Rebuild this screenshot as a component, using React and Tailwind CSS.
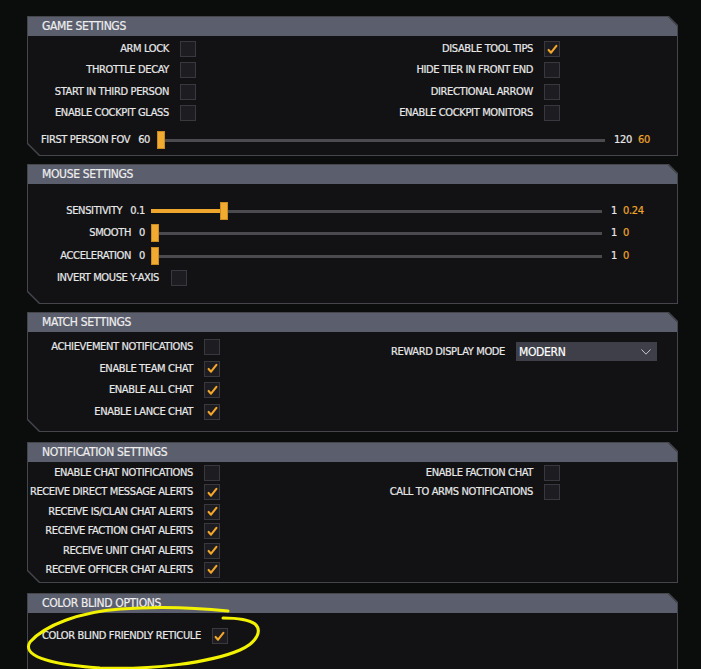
import React from 'react'

const chamfer = '[clip-path:polygon(0_0,calc(100%-9px)_0,100%_9px,100%_100%,12px_100%,0_calc(100%-12px))]'

const Box = ({ on }) => (
  <span className="flex h-4 w-4 shrink-0 items-center justify-center border border-[#38383e] bg-[#1c1c21]">
    {on && (
      <svg viewBox="0 0 16 16" className="h-[13px] w-[13px]">
        <path d="M3.2 8.6l3 3.3L12.8 3.6" fill="none" stroke="#f4a62a" strokeWidth="2.6" strokeLinecap="round" strokeLinejoin="round" />
      </svg>
    )}
  </span>
)

const Check = ({ label, on }) => (
  <div className="flex h-4 items-center justify-end gap-[11px]">
    <span className="whitespace-nowrap">{label}</span>
    <Box on={on} />
  </div>
)

// pct 0..1, thumb is 8px wide
const Slider = ({ pct, fill, className }) => (
  <div className={'relative h-[18px] ' + className}>
    <div className="absolute left-0 right-0 top-[8px] h-[3px] bg-[#4b4b4f]" />
    {fill && <div className="absolute left-0 top-[7px] h-[4px] bg-[#eea62c]" style={{ width: `calc(${pct} * (100% - 8px))` }} />}
    <div className="absolute top-0 h-[18px] w-2 border border-[#c98a1e] bg-[#f1ab30]" style={{ left: `calc(${pct} * (100% - 8px))` }} />
  </div>
)

const Panel = ({ title, className, children }) => (
  <section className={'bg-[#44464c] p-px ' + chamfer + ' ' + className}>
    <div className={'flex h-full flex-col bg-[#121215] ' + chamfer}>
      <div className="h-[19px] shrink-0 bg-[#5b5e6d] pl-[14px] text-[12px] leading-[19px] text-[#eeeeee]">{title}</div>
      {children}
    </div>
  </section>
)

const MouseRow = ({ label, min, pct, value }) => (
  <div className="flex h-[19px] items-center">
    <div className="flex w-[117px] justify-end gap-[8px] whitespace-nowrap">
      <span>{label}</span>
      <span>{min}</span>
    </div>
    <Slider pct={pct} fill className="ml-[6px] w-[451px]" />
    <span className="ml-[9px] w-[12px]">1</span>
    <span className="text-[#eda52c]">{value}</span>
  </div>
)

export default function App() {
  return (
    <div className="relative h-[669px] w-[701px] overflow-hidden bg-[#0b0d0c] pl-[27px] pt-4 font-['Liberation_Sans_Narrow','DejaVu_Sans_Condensed',sans-serif] text-[11px] leading-[16px] tracking-[-0.35px] uppercase text-[#e8e8e8] [-webkit-text-stroke:0.2px_currentColor]">
      {/* Game settings */}
      <Panel title="Game Settings" className="h-[140px] w-[651px]">
        <div className="flex pt-[5px]">
          <div className="flex w-[168px] flex-col gap-[5.3px]">
            <Check label="Arm Lock" />
            <Check label="Throttle Decay" />
            <Check label="Start in Third Person" />
            <Check label="Enable Cockpit Glass" />
          </div>
          <div className="flex w-[364px] flex-col gap-[5.3px]">
            <Check label="Disable Tool Tips" on />
            <Check label="Hide Tier in Front End" />
            <Check label="Directional Arrow" />
            <Check label="Enable Cockpit Monitors" />
          </div>
        </div>
        <div className="mt-[10px] flex h-[18px] items-center pl-[13px]">
          <span className="whitespace-nowrap">First Person FOV</span>
          <span className="ml-[8px]">60</span>
          <Slider pct={0} className="ml-[7px] flex-1" />
          <span className="ml-[9px] w-[24px]">120</span>
          <span className="w-[39px] text-[#eda52c]">60</span>
        </div>
      </Panel>

      {/* Mouse settings */}
      <Panel title="Mouse Settings" className="mt-2 h-[140px] w-[651px]">
        <div className="flex flex-col gap-[3.5px] pt-[17px]">
          <MouseRow label="Sensitivity" min="0.1" pct={0.155} value="0.24" />
          <MouseRow label="Smooth" min="0" pct={0} value="0" />
          <MouseRow label="Acceleration" min="0" pct={0} value="0" />
        </div>
        <div className="mt-[5px] flex h-4 w-[159px] items-center justify-end gap-[12px]">
          <span className="whitespace-nowrap">Invert Mouse Y-Axis</span>
          <Box />
        </div>
      </Panel>

      {/* Match settings */}
      <Panel title="Match Settings" className="mt-2 h-[120px] w-[651px]">
        <div className="flex items-start">
          <div className="flex w-[192px] flex-col gap-[5.5px] pt-[7px]">
            <Check label="Achievement Notifications" />
            <Check label="Enable Team Chat" on />
            <Check label="Enable All Chat" on />
            <Check label="Enable Lance Chat" on />
          </div>
          <div className="ml-auto flex items-center gap-[11px] pr-[20px] pt-[10px]">
            <span className="whitespace-nowrap">Reward Display Mode</span>
            <div className="flex h-[19px] w-[141px] items-center justify-between bg-[#3e3f48] pl-[3px] pr-[6px] text-[12px] text-white">
              <span>Modern</span>
              <svg viewBox="0 0 10 6" className="h-[6px] w-[10px]">
                <path d="M0.5 0.5L5 5.2L9.5 0.5" fill="none" stroke="#c8c8cc" strokeWidth="1" />
              </svg>
            </div>
          </div>
        </div>
      </Panel>

      {/* Notification settings */}
      <Panel title="Notification Settings" className="mt-[10px] h-[141px] w-[651px]">
        <div className="flex pt-[3px]">
          <div className="flex w-[192px] flex-col gap-[3.4px]">
            <Check label="Enable Chat Notifications" />
            <Check label="Receive Direct Message Alerts" on />
            <Check label="Receive IS/Clan Chat Alerts" on />
            <Check label="Receive Faction Chat Alerts" on />
            <Check label="Receive Unit Chat Alerts" on />
            <Check label="Receive Officer Chat Alerts" on />
          </div>
          <div className="flex w-[340px] flex-col gap-[3.4px]">
            <Check label="Enable Faction Chat" />
            <Check label="Call to Arms Notifications" />
          </div>
        </div>
      </Panel>

      {/* Color blind */}
      <Panel title="Color Blind Options" className="mt-[10px] h-[90px] w-[651px]">
        <div className="mt-[15px] flex h-4 items-center gap-[11px] pl-[14px]">
          <span className="whitespace-nowrap">Color Blind Friendly Reticule</span>
          <Box on />
        </div>
      </Panel>

      {/* hand drawn highlight */}
      <svg className="pointer-events-none absolute left-0 top-0 h-[669px] w-[701px]" viewBox="0 0 701 669">
        <path
          d="M228 611 C200 608 160 606 120 609 C80 612 45 625 30 642 C22 655 45 664 100 668 C150 670 210 663 240 650 C258 642 262 630 255 624 C248 619 236 618 223 618"
          fill="none"
          stroke="#f3f300"
          strokeWidth="3"
          strokeLinecap="round"
        />
      </svg>
    </div>
  )
}
